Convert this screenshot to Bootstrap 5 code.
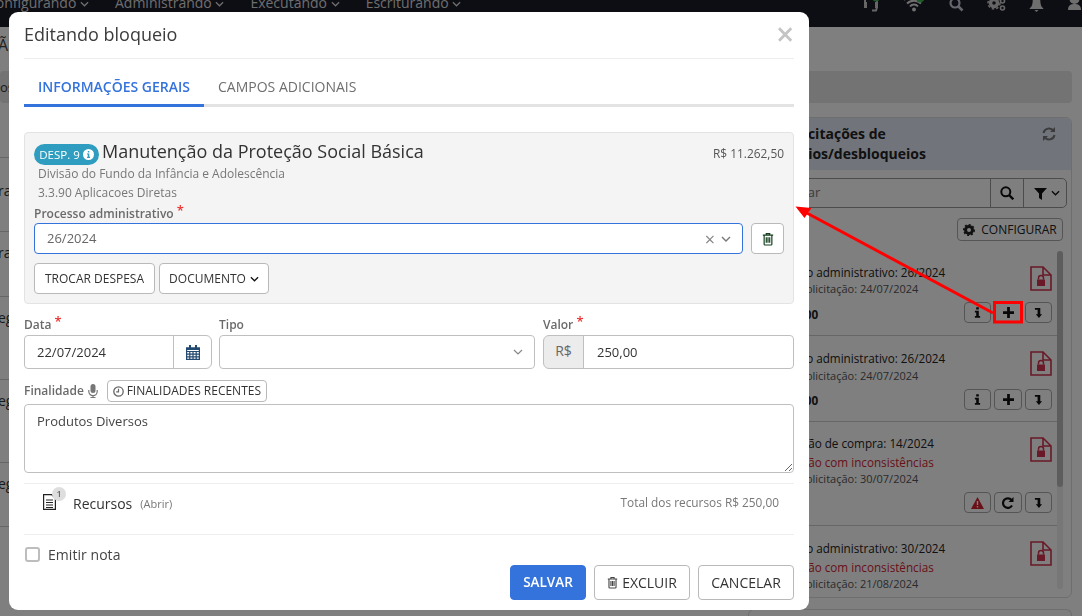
<!DOCTYPE html>
<html lang="pt-BR">
<head>
<meta charset="UTF-8">
<meta name="viewport" content="width=device-width, initial-scale=1.0">
<title>Editando bloqueio</title>
<link href="https://cdn.jsdelivr.net/npm/bootstrap@5.3.0/dist/css/bootstrap.min.css" rel="stylesheet">
<style>
    html, body { height: 616px; overflow: hidden; }
    body { font-family: "Open Sans", "Liberation Sans", sans-serif; font-size: 13px; color: #333; background: #fff; }

    /* pagina atras do modal */
    .topo { height: 27px; background: #1a1a28; color: #ddd; font-size: 14px; overflow: hidden; padding-left: 0; }
    .topo-menu { margin-left: -13px; margin-top: -7px; line-height: 20px; gap: 26px; }
    .topo-icons { margin-left: auto; margin-top: -7px; gap: 23px; }
    .topo-icons svg { display: block; }
    .titulo-pg { height: 44px; padding-top: 7px; font-size: 16px; color: #444; line-height: 22px; margin-left: -2px; }
    .barra { height: 32px; background: #e6e6e6; border-radius: 4px; margin-right: 10px; line-height: 32px; }
    .colunas { margin-top: 14px; padding-right: 10px; }
    .lista-esq { width: 748px; padding-top: 40px; }
    .lin-esq { border-bottom: 1px solid #ccc; color: #333; font-size: 14px; line-height: 20px; margin-left: -2px; }
    .lin-esq:first-child { border-top: 1px solid #ccc; }
    .painel { width: 324px; height: 481px; border: 1px solid #ddd; border-radius: 6px; overflow: hidden; }
    .painel-top { height: 52px; flex: none; background: #e2e9f5; padding: 6px 11px; font-size: 14px; font-weight: 700; line-height: 20px; color: #222; position: relative; }
    .painel-top .rec { position: absolute; right: 15px; top: 9px; }
    .recuo { padding-left: 23px; }
    .busca { margin: 8px 4px 0 3px; height: 30px; flex: none; border: 1px solid #999; border-radius: 5px; color: #777; }
    .busca > div { display: flex; align-items: center; justify-content: center; border-left: 1px solid #999; height: 100%; }
    .busca .filtro { width: 43px; padding-left: 3px; }
    .cfg-btn { margin: 10px 8px 0 auto; width: 106px; height: 23px; flex: none; border: 1px solid #aaa; border-radius: 4px; font-size: 12px; color: #222; gap: 6px; }
    .solic { margin-top: 10px; height: 348px; position: relative; }
    .solic::after { content: ""; position: absolute; right: 8px; top: 0; bottom: 8px; width: 6px; background: #eee; border-radius: 3px; }
    .solic::before { content: ""; position: absolute; right: 8px; top: 0; height: 236px; width: 6px; background: #bbb; border-radius: 3px; z-index: 1; }
    .item-sol { border-bottom: 1px solid #ccc; padding: 13px 11px 0 15px; font-size: 11.7px; position: relative; margin-right: 14px; }
    .item-sol:last-child { border-bottom: 0; padding-top: 14px; }
    .i-a { height: 85px; }
    .i-b { height: 86px; padding-top: 14px; }
    .i-c { height: 104px; }
    .item-sol p { margin: 0; line-height: 17.5px; color: #222; white-space: nowrap; }
    .item-sol .apagado { color: #555; font-size: 11px; margin: -1px 0 0 -6px; }
    .item-sol .verm { color: #d3232f; font-size: 11.7px; margin-top: 1px; }
    .item-sol .forte { font-weight: 700; margin-top: 8px; }
    .i-a .apagado { margin-top: -2px; }
    .i-a .forte { margin-top: 9px; }
    .doc-lock { position: absolute; right: 5px; top: 15px; }
    .acoes { position: absolute; right: 5px; gap: 3px; }
    .acoes span { width: 27px; height: 21px; border: 1px solid #aaa; border-radius: 4px; display: flex; align-items: center; justify-content: center; }
    .acoes span.larga { width: 28px; }
    .painel-prox { height: 7px; margin: 11px 10px 0 748px; border: 1px solid #ddd; border-bottom: 0; border-radius: 6px 6px 0 0; }

    /* modal */
    .janela { position: absolute; left: 9px; top: 12px; width: 800px; height: 598px; z-index: 1060; background: #fff; border: 0; border-radius: 9px; padding: 0 15px; }
    .janela .modal-header { height: 47px; padding: 0 0 2px; border-bottom: 1px solid #eee; border-radius: 0; }
    .janela .modal-title { font-size: 18px; line-height: 24px; color: #3c3c3c; font-weight: 400; }
    .fechar { font-size: 32px; line-height: 1; color: #c4c4c4; background: none; border: 0; padding: 0; font-weight: 600; width: 18px; }
    .abas { border-bottom: 3px solid #e3e3e3; height: 48px; gap: 0; }
    .abas .nav-link { padding: 0 14px; height: 48px; line-height: 56px; font-size: 14px; color: #6f6f6f; border-radius: 0; border-bottom: 3px solid transparent; }
    .abas .nav-link.active { color: #3573dc; font-weight: 600; border-bottom-color: #3573dc; background: none; }
    .caixa { margin-top: 25px; height: 172px; background: #f4f4f4; border: 1px solid #e3e3e3; border-radius: 4px; padding: 11px 9px 0; }
    .selo { background: #2f9dbf; color: #fff; font-size: 11.5px; font-weight: 500; height: 21px; width: 65px; border-radius: 11px; gap: 3px; }
    .desp-tit { font-size: 18px; line-height: 21px; color: #333; margin: -3px 0 0 3px; }
    .desp-val { font-size: 11.9px; color: #555; margin-left: auto; margin-top: 1px; }
    .desp-sub { font-size: 12px; line-height: 18.5px; color: #777; padding-left: 4px; }
    .rotulo { font-size: 12px; font-weight: 600; color: #6a6a6a; line-height: 16px; height: 16px; margin: 0; display: block; }
    .rotulo b { color: #f03030; font-weight: 600; font-size: 13px; line-height: 1; position: relative; top: -3px; }
    .rotulo-proc { margin-top: 4px; }
    .linha-proc { margin-top: 1px; }
    .linha-btns { margin-top: 9px; }
    .linha-campos { margin-top: 13px; }
    .sel-busca { height: 31px; border: 1px solid #3573dc; border-radius: 4px; background: #fff; padding: 0 11px 0 12px; color: #666; font-size: 13px; flex: 1; }
    .sel-busca .x { margin-left: auto; color: #888; font-size: 18px; line-height: 1; margin-right: 6px; }
    .btn-bco { background: #fff; border: 1px solid #b9b9b9; border-radius: 4px; color: #333; font-size: 12px; padding: 0; height: 31px; display: inline-flex; align-items: center; justify-content: center; }
    .campo { height: 34px; border: 1px solid #bfbfbf; border-radius: 4px; font-size: 13px; color: #333; padding: 0 13px 0 12px; box-shadow: none; }
    .addon { background: #ececec; border: 1px solid #bfbfbf; color: #666; font-size: 14px; justify-content: center; padding: 0; }
    .addon-cal { background: #fff; width: 39px; }
    .addon-rs { width: 41px; padding-bottom: 4px; }
    .select-seta { background-image: url("data:image/svg+xml,%3csvg xmlns='http://www.w3.org/2000/svg' viewBox='0 0 10 6'%3e%3cpath fill='none' stroke='%23888' stroke-width='1.2' d='M1 1l4 4 4-4'/%3e%3c/svg%3e"); background-size: 10px 6px; background-position: right 11px center; }
    .rotulo-campo { margin-bottom: 2px; }
    .col-data { width: 188px; }
    .col-tipo { width: 316px; margin-left: -1px; }
    .col-valor { width: 251px; }
    .col-valor .campo { padding-left: 13px; }
    .btn-mini { height: 22px; width: 160px; font-size: 12px; gap: 3px; margin-left: 9px; }
    .linha-final { height: 24px; margin-top: 10px; }
    .area { height: 69px; border: 1px solid #bfbfbf; border-radius: 4px; font-size: 13px; color: #444; padding: 7px 12px; box-shadow: none; margin-top: 1px; }
    .recursos { height: 52px; border-top: 1px solid #eee; border-bottom: 1px solid #eee; margin-top: 10px; padding: 0 15px 12px 19px; }
    .rec-ico { position: relative; width: 30px; height: 18px; }
    .rec-num { position: absolute; left: 9px; top: -7px; width: 14px; height: 14px; border-radius: 50%; background: #dedede; color: #666; font-size: 9px; font-weight: 600; line-height: 14px; text-align: center; }
    .rec-nome { font-size: 14px; color: #333; }
    .rec-abrir { font-size: 11px; color: #777; margin-left: 8px; margin-top: 2px; }
    .rec-total { font-size: 11.85px; color: #777; margin-left: auto; }
    .emitir { margin-top: 11px; padding: 0; min-height: 0; height: 17px; }
    .emitir .form-check-input { float: none; margin: 0 8px 0 1px; width: 15px; height: 15px; border: 2px solid #bdbdbd; border-radius: 3px; }
    .emitir .form-check-label { font-size: 14px; color: #444; letter-spacing: .05px; }
    .rodape { gap: 8px; }
    .rodape .btn { height: 35px; font-size: 14px; padding: 0; width: 96px; border-radius: 4px; }
    .rodape .btn-primary { width: 76px; background: #3573dc; border-color: #3573dc; font-weight: 600; font-size: 13.5px; }

    /* anotacao por cima de tudo */
    .seta-nota { position: absolute; left: 0; top: 0; z-index: 1070; pointer-events: none; }
</style>
</head>
<body>

<svg width="0" height="0" class="d-none">
    <symbol id="i-chev" viewBox="0 0 10 6"><path d="M1 1l4 4 4-4" fill="none" stroke="currentColor" stroke-width="1.4"/></symbol>
    <symbol id="i-trash" viewBox="0 0 14 16"><path fill="none" stroke="currentColor" stroke-width="1.4" d="M1 3.500h12M2.500 3.500V14a1 1 0 0 0 1 1h7a1 1 0 0 0 1-1V3.500M5 3.500V1.700h4v1.800M5 6v6.500M7 6v6.500M9 6v6.500"/></symbol>
    <symbol id="i-doc" viewBox="0 0 22 25"><path fill="none" stroke="currentColor" stroke-width="1.6" d="M1 1h12l8 8v15H1zM13 1v8h8"/><path fill="currentColor" d="M7 13.500h8v6.500H7z"/><path fill="none" stroke="currentColor" stroke-width="1.500" d="M8.500 13.500v-1.500a2.500 2.500 0 0 1 5 0v1.500"/></symbol>
    <symbol id="i-down" viewBox="0 0 10 12"><path fill="currentColor" d="M1 1h6v7h2L5.500 12 2 8h2V3H1z"/></symbol>
    <symbol id="i-info" viewBox="0 0 8 12"><path fill="currentColor" d="M2.500 0h3v2.500h-3zM1 4h4.500v6H7v2H1v-2h1.500V6H1z"/></symbol>
    <symbol id="i-plus" viewBox="0 0 12 12"><path fill="currentColor" d="M4.500 0h3v4.500H12v3H7.500V12h-3V7.500H0v-3h4.500z"/></symbol>
</svg>

<!-- pagina de fundo -->
<nav class="topo d-flex">
    <div class="topo-menu d-flex">
        <span>Configurando <svg width="9" height="6"><use href="#i-chev"/></svg></span>
        <span>Administrando <svg width="9" height="6"><use href="#i-chev"/></svg></span>
        <span>Executando <svg width="9" height="6"><use href="#i-chev"/></svg></span>
        <span>Escriturando <svg width="9" height="6"><use href="#i-chev"/></svg></span>
    </div>
    <div class="topo-icons d-flex align-items-start">
        <svg width="17" height="19" viewBox="0 0 17 19"><path fill="none" stroke="#ccc" stroke-width="2" d="M2 13V8a6 6 0 0 1 12 0v5M9 17.500h4l1-3"/><path fill="#ccc" d="M1 9h3v6H1zM12 9h3v6h-3z"/><circle cx="13" cy="5" r="3.500" fill="#3ab54a"/></svg>
        <svg width="22" height="19" viewBox="0 0 22 19"><path fill="none" stroke="#ddd" stroke-width="2" d="M1 7a14 14 0 0 1 20 0M4 10.500a10 10 0 0 1 14 0M7 13.500a5 5 0 0 1 8 0"/><circle cx="11" cy="16.500" r="2" fill="#ddd"/><circle cx="17" cy="6" r="3.500" fill="#3ab54a"/></svg>
        <svg width="16" height="19" viewBox="0 0 16 19"><circle cx="7" cy="10" r="4.500" fill="none" stroke="#ccd" stroke-width="2.200"/><path stroke="#ccd" stroke-width="2.500" d="M10.500 13.500l4 4"/></svg>
        <svg width="19" height="19" viewBox="0 0 19 19"><circle cx="7" cy="10" r="3.500" fill="none" stroke="#ccc" stroke-width="3.500"/><circle cx="7" cy="10" r="6" fill="none" stroke="#ccc" stroke-width="1.500" stroke-dasharray="2.500 2"/><circle cx="15.500" cy="8" r="2" fill="none" stroke="#ccc" stroke-width="1.600"/><circle cx="15.500" cy="15" r="2" fill="none" stroke="#ccc" stroke-width="1.600"/></svg>
        <svg width="15" height="19" viewBox="0 0 15 19"><path fill="#ddd" d="M7.500 0c4 2 3.500 6 4 10s2 4 3 6H.500c1-2 2.500-2 3-6s0-8 4-10zM5.500 17h4l-2 2z"/></svg>
        <svg width="15" height="19" viewBox="0 0 15 19"><circle cx="7.500" cy="6" r="5" fill="#ddd"/><path fill="#ddd" d="M1 17c0-5 3-6 6.500-6s6.500 1 6.500 6z"/></svg>
    </div>
</nav>

<div class="titulo-pg">Ã</div>
<div class="barra">os</div>

<div class="colunas d-flex">
    <div class="lista-esq">
        <div class="lin-esq" style="height:75px;padding-top:23px">ra</div>
        <div class="lin-esq" style="height:65px;padding-top:11px">ra</div>
        <div class="lin-esq" style="height:83px;padding-top:11px">eg</div>
        <div class="lin-esq" style="height:83px;padding-top:11px">eg</div>
        <div class="lin-esq" style="height:64px;padding-top:11px">eg</div>
    </div>
    <div class="painel d-flex flex-column">
        <div class="painel-top">
            <div class="recuo">Solicitações de</div>
            <div>bloqueios/desbloqueios</div>
            <svg class="rec" width="14" height="14" viewBox="0 0 14 14"><path fill="none" stroke="#777" stroke-width="2" d="M1.500 6a5.500 5.500 0 0 1 10-2M12.500 8a5.500 5.500 0 0 1-10 2"/><path fill="#777" d="M13 0v5H8zM1 14V9h5z"/></svg>
        </div>
        <div class="busca d-flex">
            <div class="flex-grow-1 border-0 justify-content-start ps-2">Pesquisar</div>
            <div style="width:33px">
                <svg width="14" height="14" viewBox="0 0 14 14"><circle cx="5.800" cy="5.800" r="4.500" fill="none" stroke="#111" stroke-width="2"/><path stroke="#111" stroke-width="2.400" d="M9 9l4.300 4.300"/></svg>
            </div>
            <div class="filtro gap-1">
                <svg width="13" height="13" viewBox="0 0 13 13"><path fill="#111" d="M0 1h13L8 6.500V13L5 11V6.500z"/></svg>
                <svg width="9" height="6" style="color:#111"><use href="#i-chev"/></svg>
            </div>
        </div>
        <div class="cfg-btn d-flex align-items-center justify-content-center">
            <svg width="12" height="12" viewBox="0 0 12 12"><circle cx="6" cy="6" r="3.500" fill="none" stroke="#222" stroke-width="3"/><circle cx="6" cy="6" r="5.300" fill="none" stroke="#222" stroke-width="1.400" stroke-dasharray="2 2"/></svg>
            CONFIGURAR
        </div>
        <div class="solic">
            <div class="item-sol i-a">
                <p>Processo administrativo: 26/2024</p>
                <p class="apagado">Data da solicitação: 24/07/2024</p>
                <p class="forte">R$ 250,00</p>
                <svg class="doc-lock" width="22" height="25" style="color:#d2334f"><use href="#i-doc"/></svg>
                <div class="acoes d-flex" style="top:51px">
                    <span><svg width="7" height="11" style="color:#111"><use href="#i-info"/></svg></span>
                    <span class="larga"><svg width="11" height="11" style="color:#111"><use href="#i-plus"/></svg></span>
                    <span><svg width="9" height="11" style="color:#111"><use href="#i-down"/></svg></span>
                </div>
            </div>
            <div class="item-sol i-b">
                <p>Processo administrativo: 26/2024</p>
                <p class="apagado">Data da solicitação: 24/07/2024</p>
                <p class="forte">R$ 250,00</p>
                <svg class="doc-lock" width="22" height="25" style="color:#d2334f"><use href="#i-doc"/></svg>
                <div class="acoes d-flex" style="top:53px">
                    <span><svg width="7" height="11" style="color:#111"><use href="#i-info"/></svg></span>
                    <span class="larga"><svg width="11" height="11" style="color:#111"><use href="#i-plus"/></svg></span>
                    <span><svg width="9" height="11" style="color:#111"><use href="#i-down"/></svg></span>
                </div>
            </div>
            <div class="item-sol i-c">
                <p>Solicitação de compra: 14/2024</p>
                <p class="verm">Solicitação com inconsistências</p>
                <p class="apagado">Data da solicitação: 30/07/2024</p>
                <svg class="doc-lock" width="22" height="25" style="color:#d2334f"><use href="#i-doc"/></svg>
                <div class="acoes d-flex" style="top:70px">
                    <span><svg width="13" height="12" viewBox="0 0 13 12"><path fill="#d2232f" d="M6.500 0L13 12H0z"/><path fill="#fff" d="M5.800 4h1.400v4H5.800zM5.800 9h1.400v1.500H5.800z"/></svg></span>
                    <span class="larga"><svg width="12" height="12" viewBox="0 0 12 12"><path fill="none" stroke="#111" stroke-width="2.200" d="M10 8.500A4.800 4.800 0 1 1 9.500 3"/><path fill="#111" d="M11.500 0v5h-5z"/></svg></span>
                    <span><svg width="9" height="11" style="color:#111"><use href="#i-down"/></svg></span>
                </div>
            </div>
            <div class="item-sol">
                <p>Processo administrativo: 30/2024</p>
                <p class="verm">Solicitação com inconsistências</p>
                <p class="apagado">Data da solicitação: 21/08/2024</p>
                <svg class="doc-lock" width="22" height="25" style="color:#d2334f"><use href="#i-doc"/></svg>
            </div>
        </div>
    </div>
</div>
<div class="painel-prox"></div>

<div class="modal-backdrop fade show"></div>

<!-- modal -->
<div class="modal-content janela">
    <div class="modal-header">
        <h5 class="modal-title">Editando bloqueio</h5>
        <button type="button" class="fechar" aria-label="Fechar">×</button>
    </div>

    <ul class="nav abas">
        <li class="nav-item"><a class="nav-link active" href="#">INFORMAÇÕES GERAIS</a></li>
        <li class="nav-item"><a class="nav-link" href="#">CAMPOS ADICIONAIS</a></li>
    </ul>

    <div class="caixa">
        <div class="d-flex align-items-start">
            <span class="selo d-inline-flex align-items-center justify-content-center">DESP. 9
                <svg width="11" height="11" viewBox="0 0 11 11"><circle cx="5.500" cy="5.500" r="5.500" fill="#fff"/><path fill="#2f9dbf" d="M4.800 2h1.500v1.500H4.800zM4 4.500h2.300v3.300H7V9H4V7.800h.8V5.600H4z"/></svg>
            </span>
            <span class="desp-tit">Manutenção da Proteção Social Básica</span>
            <span class="desp-val">R$ 11.262,50</span>
        </div>
        <div class="desp-sub">Divisão do Fundo da Infância e Adolescência</div>
        <div class="desp-sub">3.3.90 Aplicacoes Diretas</div>
        <label class="rotulo rotulo-proc">Processo administrativo <b>*</b></label>
        <div class="d-flex gap-2 linha-proc">
            <div class="sel-busca d-flex align-items-center">
                26/2024
                <span class="x">×</span>
                <svg width="10" height="6" style="color:#777"><use href="#i-chev"/></svg>
            </div>
            <button type="button" class="btn-bco" style="width:33px">
                <svg width="12" height="14" style="color:#14401f"><use href="#i-trash"/></svg>
            </button>
        </div>
        <div class="d-flex gap-1 linha-btns">
            <button type="button" class="btn-bco" style="width:121px">TROCAR DESPESA</button>
            <button type="button" class="btn-bco gap-1" style="width:110px">DOCUMENTO<svg width="9" height="6" style="color:#111"><use href="#i-chev"/></svg></button>
        </div>
    </div>

    <div class="d-flex gap-2 linha-campos">
        <div class="col-data">
            <label class="rotulo rotulo-campo">Data <b>*</b></label>
            <div class="input-group">
                <input type="text" class="form-control campo" value="22/07/2024">
                <span class="input-group-text addon addon-cal">
                    <svg width="14" height="15" viewBox="0 0 14 15"><path fill="none" stroke="#22496f" stroke-width="1.200" d="M.6 3h12.800v11.400H.6zM.6 6.500h12.800M.6 9.200h12.800M.6 11.800h12.800M3.800 6.500v8M7 6.500v8M10.200 6.500v8"/><path fill="#22496f" d="M0 2.500h14V5H0zM3 0h2v3H3zM9 0h2v3H9z"/></svg>
                </span>
            </div>
        </div>
        <div class="col-tipo">
            <label class="rotulo rotulo-campo">Tipo</label>
            <select class="form-select campo select-seta"><option></option></select>
        </div>
        <div class="col-valor">
            <label class="rotulo rotulo-campo">Valor <b>*</b></label>
            <div class="input-group">
                <span class="input-group-text addon addon-rs">R$</span>
                <input type="text" class="form-control campo" value="250,00">
            </div>
        </div>
    </div>

    <div class="d-flex align-items-center linha-final">
        <span class="rotulo">Finalidade</span>
        <svg class="ms-1" width="10" height="14" viewBox="0 0 10 14"><rect x="2.500" y="0" width="5" height="9" rx="2.500" fill="#777"/><path fill="none" stroke="#777" stroke-width="1.200" d="M.8 6v1.500a4.200 4.200 0 0 0 8.400 0V6M5 12v2M2.500 13.500h5"/></svg>
        <button type="button" class="btn-bco btn-mini">
            <svg width="11" height="11" viewBox="0 0 11 11"><circle cx="5.500" cy="5.500" r="4.700" fill="none" stroke="#666" stroke-width="1.300"/><path fill="none" stroke="#666" stroke-width="1.200" d="M5.500 2.800v3H3.200"/></svg>
            FINALIDADES RECENTES
        </button>
    </div>

    <textarea class="form-control area">Produtos Diversos</textarea>

    <div class="recursos d-flex align-items-center">
        <div class="rec-ico">
            <svg width="13" height="16" viewBox="0 0 13 16" style="display:block"><path fill="none" stroke="#222" stroke-width="1.200" d="M.6.6h8l3.800 3.800v11H.6z"/><path stroke="#222" d="M3 6h7M3 8.500h7M3 11h7M3 13.500h7"/></svg>
            <span class="rec-num">1</span>
        </div>
        <span class="rec-nome">Recursos</span>
        <span class="rec-abrir">(Abrir)</span>
        <span class="rec-total">Total dos recursos R$ 250,00</span>
    </div>

    <div class="form-check emitir d-flex align-items-center">
        <input class="form-check-input" type="checkbox" id="emitirNota">
        <label class="form-check-label" for="emitirNota">Emitir nota</label>
    </div>

    <div class="rodape d-flex justify-content-end">
        <button type="button" class="btn btn-primary">SALVAR</button>
        <button type="button" class="btn-bco btn gap-1">
            <svg width="11" height="13" style="color:#444"><use href="#i-trash"/></svg>EXCLUIR
        </button>
        <button type="button" class="btn-bco btn">CANCELAR</button>
    </div>
</div>

<!-- seta e quadro vermelhos da anotacao -->
<svg class="seta-nota" width="1082" height="616" viewBox="0 0 1082 616">
    <path d="M993 313L805 212" stroke="#ff0000" stroke-width="3"/>
    <path d="M795.500 206.500l16 1.500-7 10z" fill="#ff0000"/>
    <rect x="994.500" y="302.500" width="27" height="19.500" fill="none" stroke="#ff0000" stroke-width="3"/>
</svg>

</body>
</html>
